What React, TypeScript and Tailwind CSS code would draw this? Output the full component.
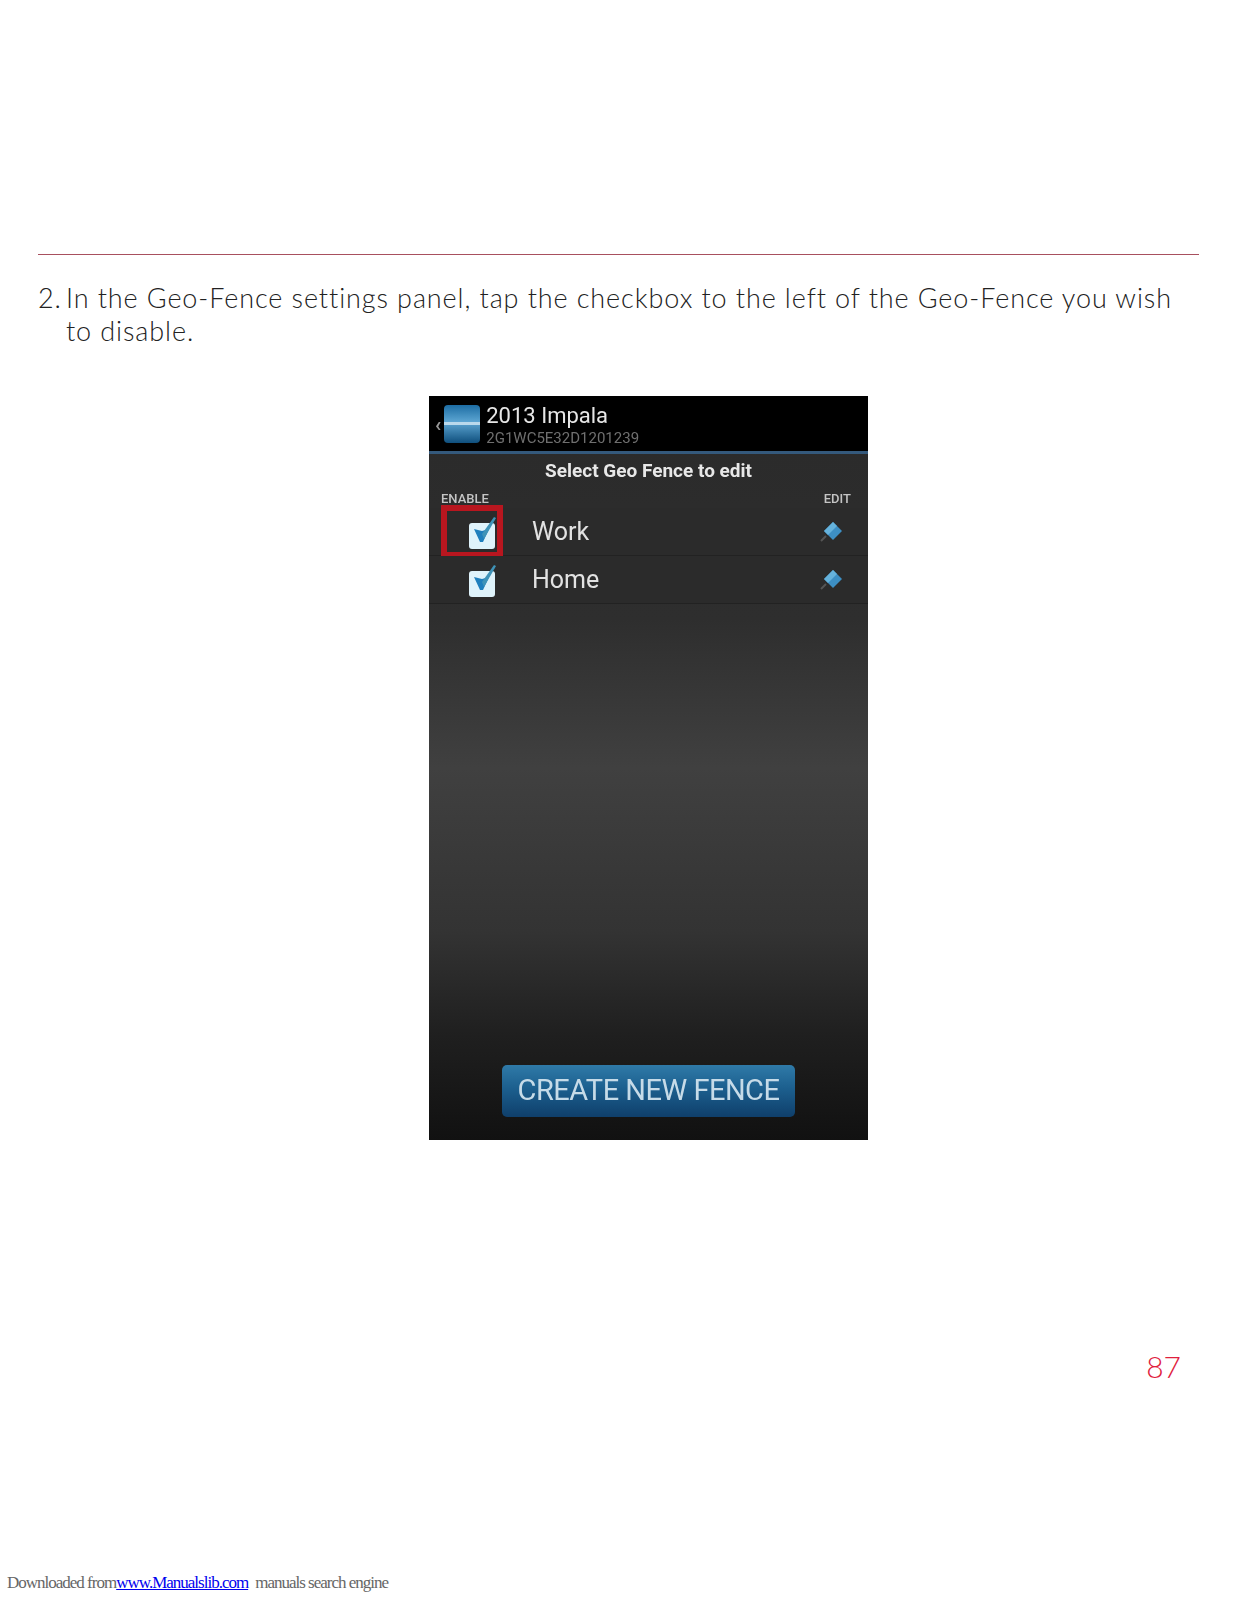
function CheckIcon() {
  return (
    <svg width="36" height="36" viewBox="0 0 36 36" className="blur-[0.5px]">
      <rect x="3" y="9" width="26" height="26" rx="3" fill="#dff3fb" />
      <path d="M8 15 L16 17 L23 15 L17 28 L14 28 Z" fill="#1f7fbd" />
      <path d="M16 20 L28 3 L30 4 L18 25 Z" fill="#3f93b8" />
    </svg>
  )
}

function PinIcon() {
  return (
    <svg width="26" height="26" viewBox="0 0 26 26" className="blur-[0.6px]">
      <path d="M15 3 L24 12 L15 21 L6 12 Z" fill="#3d8fc4" />
      <path d="M6 12 L15 3 L19 7 L10 16 Z" fill="#65b2dc" />
      <path d="M8 17 L3 22" stroke="#555" strokeWidth="2" />
    </svg>
  )
}

function FenceRow({ name, highlighted }: { name: string; highlighted?: boolean }) {
  return (
    <div className="relative flex h-[48px] items-center border-b border-[#222] bg-[#2b2b2b] pl-[37px] pr-[24px]">
      <CheckIcon />
      <span className="ml-[30px] flex-1 text-[25px] font-[Roboto,sans-serif] text-[#e2e2e2] blur-[0.6px]">{name}</span>
      <PinIcon />
      {highlighted && (
        <div className="absolute left-[12px] top-[-3px] h-[53px] w-[62px] border-[6px] border-[#b8161f]" />
      )}
    </div>
  )
}

function PhoneScreen() {
  return (
    <div className="flex h-[744px] w-[439px] flex-col overflow-hidden bg-[linear-gradient(to_bottom,#2a2a2a_0%,#2e2e2e_30%,#404040_50%,#333333_72%,#1f1f1f_86%,#111111_100%)] font-[Roboto,sans-serif]">
      <div className="flex h-[58px] shrink-0 items-center border-b-[3px] border-[#34597c] bg-black pl-[6px]">
        <span className="text-[20px] font-bold leading-none text-[#999] blur-[0.6px]">‹</span>
        <div className="ml-[3px] flex h-[38px] w-[36px] items-center rounded-sm bg-[linear-gradient(to_bottom,#1d6da3,#5da6d3_45%,#0f4f7d)] blur-[0.7px]">
          <div className="h-[3px] w-full bg-[#b9d9ec]" />
        </div>
        <div className="ml-[6px] flex flex-col blur-[0.5px]">
          <span className="text-[22px] leading-[28px] text-[#e6e6e6]">2013 Impala</span>
          <span className="text-[15px] leading-[16px] text-[#6f6f6f]">2G1WC5E32D1201239</span>
        </div>
      </div>
      <div className="mt-[4px] text-center text-[19px] font-bold leading-[26px] text-[#e8e8e8] blur-[0.5px]">
        Select Geo Fence to edit
      </div>
      <div className="mt-[7px] flex items-center justify-between pl-[12px] pr-[17px] text-[13px] font-medium leading-[16px] text-[#c4c4c4] blur-[0.5px]">
        <span>ENABLE</span>
        <span>EDIT</span>
      </div>
      <div className="mt-[1px]">
        <FenceRow name="Work" highlighted />
        <FenceRow name="Home" />
      </div>
      <div className="mt-auto mb-[23px] flex justify-center">
        <div className="flex h-[52px] w-[293px] items-center justify-center rounded-[5px] bg-[linear-gradient(to_bottom,#2f7aa8,#1c5f8e_45%,#0f3f6b)] text-[29px] tracking-[-0.5px] text-[#c6dbe8] blur-[0.6px]">
          CREATE NEW FENCE
        </div>
      </div>
    </div>
  )
}

export default function App() {
  return (
    <div className="relative flex h-[1600px] w-[1237px] flex-col overflow-hidden bg-white">
      <div className="mx-[38px] mt-[254px] h-px bg-[#a8505e]" />
      <div className="ml-[38px] mt-[26px] flex w-[1161px] font-['Lato',sans-serif] text-[27px] font-light leading-[33px] tracking-[0.9px] text-[#222]">
        <span className="w-[28px] shrink-0">2.</span>
        <p>
          In the Geo-Fence settings panel, tap the checkbox to the left of the Geo-Fence you wish to disable.
        </p>
      </div>
      <div className="mt-[49px] ml-[429px]">
        <PhoneScreen />
      </div>
      <div className="mt-[208px] mr-[56px] self-end font-['Lato',sans-serif] text-[30px] font-light leading-[36px] text-[#e0203c]">
        87
      </div>
      <div className="mt-auto mb-[7px] ml-[7px] font-['Liberation_Serif',serif] text-[17px] leading-[20px] tracking-[-1px] text-[#666]">
        Downloaded from<a href="#" className="text-[#0000ee] underline">www.Manualslib.com</a>
        <span className="ml-[7px]">manuals search engine</span>
      </div>
    </div>
  )
}
